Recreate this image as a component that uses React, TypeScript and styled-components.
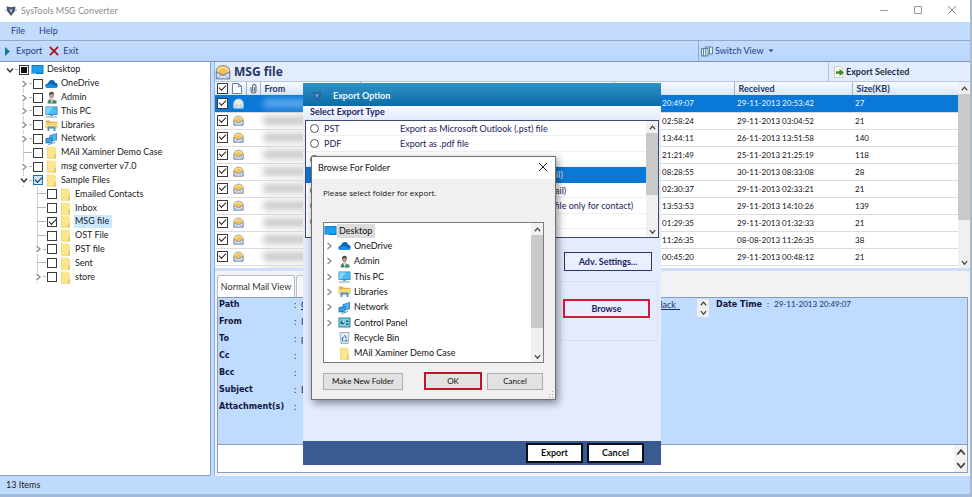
import React from "react";
import styled, { createGlobalStyle, css } from "styled-components";

const ui = `Lato, "Noto Sans", sans-serif`;
const tahoma = `"DejaVu Sans", "Noto Sans", sans-serif`;

const GlobalStyle = createGlobalStyle`
  *, *::before, *::after { box-sizing: border-box; }
  body { margin: 0; font: 9px/12px ${ui}; color: #1a1a1a; background: #fff; }
  button { font: inherit; color: inherit; margin: 0; padding: 0; border: 0; background: none; text-align: left; }
  input { margin: 0; }
  ul { list-style: none; margin: 0; padding: 0; }
  h1, h2, p, dl, dd, dt { margin: 0; font: inherit; }
`;

/* ---------- window ---------- */

const Window = styled.div`
  position: relative;
  display: flex;
  flex-direction: column;
  min-height: 100vh;
  border-right: 2px solid #a9bccb;
  background: #bfdbff;
`;

const TitleBar = styled.header`
  display: flex;
  align-items: center;
  gap: 4px;
  height: 22px;
  padding: 0 13px 0 5px;
  background: #fff;
  color: #8c8c8c;
`;

const AppTitle = styled.h1`
  flex: 1;
`;

const CaptionButtons = styled.div`
  display: flex;
  gap: 24px;
`;

const MenuBar = styled.nav`
  display: flex;
  gap: 14px;
  height: 19px;
  padding: 0 11px;
  align-items: center;
  background: #c3dbfd;
  border-bottom: 1px solid #94a9d2;
  color: #1e3f86;
`;

const ToolBar = styled.div`
  display: flex;
  height: 21px;
  align-items: center;
  background: linear-gradient(#c3dbfd, #bad6fd);
  border-bottom: 1px solid #7f93b5;
  color: #1e3f86;
`;

const ToolGroup = styled.div<{ $end?: boolean }>`
  display: flex;
  align-items: center;
  gap: 7px;
  height: 20px;
  ${(p) => (p.$end ? css`width: 272px; border-left: 1px solid #94a9d2; padding-left: 2px;` : css`flex: 1; padding-left: 4px;`)}
`;

const ToolButton = styled.button<{ $gap: number }>`
  display: flex;
  align-items: center;
  gap: ${(p) => p.$gap}px;
`;

const Main = styled.main`
  flex: 1;
  display: flex;
  gap: 3px;
  min-height: 0;
`;

const StatusBar = styled.footer`
  display: flex;
  align-items: center;
  height: 18px;
  padding: 0 6px;
  background: #c0dafe;
`;

const BottomEdge = styled.div`
  height: 3px;
  background: #a3b9dc;
`;

/* ---------- folder tree ---------- */

const TreePane = styled.aside`
  width: 211px;
  padding: 1px 0 0 4px;
  background: #fff;
  border-right: 1px solid #8fa3c4;
  border-bottom: 1px solid #8fa3c4;
`;

const Tree = styled.ul`
  display: grid;
  grid-auto-rows: 1fr;
  height: 221px;
`;

const TreeItem = styled.li<{ $depth: number }>`
  display: flex;
  align-items: center;
  padding-left: ${(p) => p.$depth * 14}px;
`;

const TreeGuide = styled.span<{ $root?: boolean; $leaf?: boolean }>`
  display: grid;
  align-self: stretch;
  width: 15px;
  align-items: center;
  padding-left: 1px;
  background:
    linear-gradient(#b5b5b5, #b5b5b5) ${(p) => (p.$leaf ? "5px 6px / 9px 1px" : "11px 6px / 3px 1px")} no-repeat,
    linear-gradient(#d0d0d0, #d0d0d0) 5px 0 / ${(p) => (p.$root ? "0 0" : "1px 100%")} no-repeat;
`;

const Twisty = styled.button`
  display: grid;
  place-items: center;
  width: 9px;
  height: 9px;
  background: #fff;
`;

const TreeLabel = styled.label<{ $selected?: boolean }>`
  display: flex;
  align-items: center;
  gap: 2px;

  span {
    padding: 0 3px 1px 1px;
    background: ${(p) => (p.$selected ? "#cce8ff" : "none")};
  }
`;

const Check = styled.input<{ $size?: number; $tint?: boolean }>`
  appearance: none;
  position: relative;
  flex: none;
  width: ${(p) => p.$size ?? 10}px;
  height: ${(p) => p.$size ?? 10}px;
  border: 1px solid ${(p) => (p.$tint ? "#1b6fae" : "#3b3b3b")};
  background: ${(p) => (p.$tint ? "#c5e6fb" : "#fff")};

  &:checked::after {
    content: "";
    position: absolute;
    left: 1px;
    top: 1px;
    width: 7px;
    height: 4px;
    border: solid #222;
    border-width: 0 0 1px 1px;
    transform: rotate(-45deg);
  }

  &:indeterminate::after {
    content: "";
    position: absolute;
    inset: 1px;
    background: #111;
  }
`;

/* ---------- mail list ---------- */

const Workspace = styled.section`
  flex: 1;
  min-width: 0;
  display: flex;
  flex-direction: column;
  background: #f1f2f4;
  border-left: 1px solid #8fb3dd;
`;

const FolderBar = styled.div`
  display: flex;
  height: 20px;
  align-items: stretch;
  background: #e2ecfd;
  border-bottom: 1px solid #b6c7e0;
`;

const FolderTitle = styled.h2`
  flex: 1;
  display: flex;
  align-items: center;
  gap: 3px;
  font: 700 12px/16px "Open Sans", sans-serif;
  color: #26375f;
`;

const ExportSelected = styled.button`
  display: flex;
  align-items: center;
  gap: 2px;
  width: 142px;
  padding-left: 5px;
  border-left: 1px solid #b3c3dd;
  font-weight: 700;
  color: #222b44;
`;

const ListFrame = styled.div`
  display: flex;
  height: 189px;
  background: #fff;
  border-bottom: 3px solid #cfe0f6;
`;

const ListClip = styled.div`
  flex: 1;
  min-width: 0;
  overflow: hidden;
`;

const MailTable = styled.table`
  width: 100%;
  table-layout: fixed;
  border-collapse: collapse;
  font-size: 8px;

  col.tick { width: 15px; }
  col.kind { width: 16px; }
  col.clip { width: 14px; }
  col.from { width: 100px; }
  col.sent { width: 120px; }
  col.received { width: 118px; }
  col.size { width: 106px; }
`;

const HeadCell = styled.th<{ $line?: boolean }>`
  height: 13px;
  padding: 0 0 0 4px;
  text-align: left;
  font: 700 9px/12px ${ui};
  color: #26375f;
  background: linear-gradient(#f9fbff, #d8e5f8);
  ${(p) => p.$line && css`border-left: 1px solid #a5b3c9;`}

  &:first-child, &:nth-child(2), &:nth-child(3) { padding: 0 0 0 2px; }
  svg, input { display: block; }
`;

const MailRow = styled.tr<{ $selected?: boolean }>`
  height: 17px;
  color: ${(p) => (p.$selected ? "#f0f7ff" : "#111")};
  background: ${(p) => (p.$selected ? "#0a78d7" : "#fff")};
  border-bottom: 1px solid #dcdcdc;

  td { padding: 0 0 0 3px; height: 17px; }
  td:first-child { padding-left: 2px; }
  input, svg { display: block; }
`;

const Redacted = styled.div<{ $selected?: boolean }>`
  height: 9px;
  width: 60px;
  border-radius: 4px;
  background: ${(p) => (p.$selected ? "#5ba8ec" : "#c9c9c9")};
  filter: blur(3px);
`;

/* ---------- scroll bars ---------- */

const ScrollTrack = styled.div`
  display: flex;
  flex-direction: column;
  width: 12px;
  flex: none;
  background: #f0f0f0;
`;

const ScrollArrow = styled.button`
  display: grid;
  place-items: center;
  height: 12px;
`;

const ScrollRoom = styled.div`
  flex: 1;
`;

const ScrollThumb = styled.div<{ $height: number }>`
  height: ${(p) => p.$height}px;
  background: #c9c9c9;
`;

const Chevron = ({ dir, color = "#444", size = 7, weight = 1.4 }: { dir: "up" | "down" | "right"; color?: string; size?: number; weight?: number }) => (
  <svg width={size} height={size} viewBox="0 0 8 8" fill="none" stroke={color} strokeWidth={weight}>
    <path d={dir === "up" ? "M1 6 4 2.5 7 6" : dir === "down" ? "M1 2.5 4 6 7 2.5" : "M2.5 1 6 4 2.5 7"} />
  </svg>
);

const ScrollBar = ({ thumb }: { thumb: number }) => (
  <ScrollTrack>
    <ScrollArrow type="button" aria-label="Scroll up"><Chevron dir="up" /></ScrollArrow>
    <ScrollThumb $height={thumb} />
    <ScrollRoom />
    <ScrollArrow type="button" aria-label="Scroll down"><Chevron dir="down" /></ScrollArrow>
  </ScrollTrack>
);

/* ---------- mail details ---------- */

const Tabs = styled.div`
  display: flex;
  gap: 1px;
  height: 26px;
  padding: 4px 0 0 2px;
`;

const Tab = styled.button<{ $active?: boolean }>`
  width: 78px;
  text-align: center;
  color: #333;
  background: ${(p) => (p.$active ? "#fff" : "#f6f6f6")};
  border: 1px solid #b4bccb;
  border-bottom: 0;
  border-radius: 3px 3px 0 0;
`;

const Details = styled.div`
  flex: 1;
  display: flex;
  margin: 0 2px 0 2px;
  background: #bfdbff;
  border: 1px solid #8a9cb9;
  color: #1d2f5e;
`;

const Fields = styled.dl`
  display: grid;
  grid-template-columns: 75px 7px 379px;
  grid-auto-rows: 17px;
  padding-left: 1px;
  align-content: start;
  line-height: 13px;
`;

const FieldName = styled.dt`
  font: 700 8px/13px ${tahoma};
  color: #14143a;
`;

const FieldValue = styled.dd`
  overflow: hidden;
`;

const PathLink = styled.a`
  display: flex;
  justify-content: space-between;
  color: #1d2f5e;
  text-decoration: underline;
`;

const Spinner = styled.div`
  display: flex;
  flex-direction: column;
  width: 12px;
  height: 18px;
  margin: 1px 7px 0 17px;
  background: #f0f0f0;

  button { flex: 1; display: grid; place-items: center; }
`;

const DateLine = styled.p`
  display: flex;
  gap: 5px;
  font: 8px/13px ${ui};

  strong { font: 700 8px/13px ${tahoma}; color: #14143a; }
`;

const Preview = styled.div`
  display: flex;
  height: 28px;
  margin: 0 2px 3px;
  border: 1px solid #8a9cb9;
  border-top: 0;
  background: #fff;
`;

const PreviewText = styled.textarea`
  flex: 1;
  border: 0;
  padding: 2px;
  resize: none;
  outline: 0;
  overflow: hidden;
`;

const PreviewSteps = styled.div`
  display: flex;
  flex-direction: column;
  width: 13px;
  background: #f2f2f2;

  button { flex: 1; display: grid; place-items: center; }
`;

/* ---------- export dialog ---------- */

const ExportDialog = styled.section`
  position: absolute;
  left: 303px;
  top: 83px;
  width: 358px;
  height: 382px;
  display: flex;
  flex-direction: column;
  background: #e4ebfd;
`;

const ExportTitle = styled.h2`
  display: flex;
  align-items: center;
  gap: 10px;
  height: 23px;
  padding: 2px 0 0 8px;
  background: linear-gradient(#2f93c6, #0b6ba6);
  color: #eef6ff;
  font-weight: 700;
`;

const ExportCaption = styled.p`
  height: 14px;
  padding-left: 7px;
  font-weight: 700;
  color: #23235e;
  background: linear-gradient(#f7f9ff, #e2e9fb);
`;

const TypeFrame = styled.div`
  display: flex;
  height: 118px;
  margin: 0 2px;
  border: 1px solid #3d4a6a;
  background: #fff;
`;

const TypeList = styled.ul`
  flex: 1;
  display: grid;
  grid-auto-rows: 1fr;
  height: 108px;
`;

const TypeRow = styled.li<{ $selected?: boolean }>`
  border-bottom: 1px solid ${(p) => (p.$selected ? "#0a78d7" : "#eef0f4")};
  background: ${(p) => (p.$selected ? "#0a78d7" : "#fff")};
  color: ${(p) => (p.$selected ? "#e3f0ff" : "#23235e")};

  label { display: grid; grid-template-columns: 14px 76px 1fr; padding: 2px 0 0 4px; line-height: 12px; white-space: nowrap; }
`;

const Radio = styled.input`
  appearance: none;
  width: 9px;
  height: 9px;
  margin-top: 1px;
  border: 1px solid #555;
  border-radius: 50%;
  background: #fff;
`;

const ExportBody = styled.div`
  flex: 1;
  display: flex;
  flex-direction: column;
  align-items: flex-end;
  padding: 14px 3px 0;
`;

const AdvButton = styled.button`
  width: 88px;
  height: 19px;
  margin-right: 6px;
  border: 1px solid #2b3768;
  text-align: center;
  font-weight: 700;
  color: #23235e;
  background: #eaf0ff;
`;

const BrowseGroup = styled.div`
  display: flex;
  align-items: flex-start;
  justify-content: center;
  width: 98px;
  height: 60px;
  margin-top: 10px;
  padding: 17px 5px 0 0;
  border: 1px solid #d6dff3;
`;

const BrowseButton = styled.button`
  width: 87px;
  height: 19px;
  border: 2px solid #d01c36;
  text-align: center;
  font-weight: 700;
  color: #23235e;
  background: #e8eeff;
`;

const ExportFooter = styled.div`
  display: flex;
  justify-content: flex-end;
  align-items: flex-start;
  gap: 4px;
  height: 24px;
  padding: 2px 17px 0 0;
  background: #395b92;
`;

const FooterButton = styled.button`
  width: 57px;
  height: 20px;
  border: 2px solid #0b0f1c;
  background: #fff;
  text-align: center;
  font-weight: 700;
  color: #111;
`;

/* ---------- folder picker ---------- */

const Picker = styled.section`
  position: absolute;
  left: 311px;
  top: 156px;
  width: 245px;
  height: 244px;
  display: flex;
  flex-direction: column;
  background: #f0f0f0;
  border: 1px solid #6f6f75;
  box-shadow: 2px 3px 8px rgba(0, 0, 0, 0.45);
  color: #111;
`;

const PickerTitle = styled.h2`
  display: flex;
  align-items: center;
  justify-content: space-between;
  height: 22px;
  padding: 0 7px 0 6px;
  background: #fff;
`;

const PickerNote = styled.p`
  padding: 8px 11px 0;
  font: 8px/12px "Open Sans", "Noto Sans", sans-serif;
`;

const PickerFrame = styled.div`
  display: flex;
  height: 141px;
  margin: 23px 11px 0;
  border: 1px solid #7b7b80;
  background: #fff;
`;

const PickerList = styled.ul`
  flex: 1;
  display: grid;
  grid-auto-rows: 1fr;
  height: 138px;
`;

const PickerRow = styled.li<{ $root?: boolean }>`
  display: grid;
  grid-template-columns: ${(p) => (p.$root ? "" : "13px ")}13px max-content;
  column-gap: ${(p) => (p.$root ? 0 : 1)}px;
  align-items: center;

  button:last-child {
    padding: 1px 3px 1px 2px;
    background: ${(p) => (p.$root ? "#dcdcdc" : "none")};
  }
`;

const PickerActions = styled.div`
  display: flex;
  align-items: center;
  padding: 9px 12px 0 11px;
`;

const PickerButton = styled.button<{ $width: number; $marked?: boolean }>`
  width: ${(p) => p.$width}px;
  height: ${(p) => (p.$marked ? 18 : 17)}px;
  margin-left: ${(p) => (p.$marked ? "auto" : "0")};
  margin-right: ${(p) => (p.$marked ? 5 : 0)}px;
  border: ${(p) => (p.$marked ? "2px solid #c8102a" : "1px solid #adadad")};
  background: #e2e2e2;
  text-align: center;
  font-size: 8px;
`;

const GripCorner = styled.div`
  align-self: flex-end;
  margin: auto 1px 1px 0;
  height: 7px;
  svg { display: block; }
`;

/* ---------- icons ---------- */

type IconName = "desktop" | "cloud" | "user" | "pc" | "libraries" | "network" | "folder" | "control" | "recycle";

const Icon = ({ name }: { name: IconName }) => (
  <svg width="13" height="13" viewBox="0 0 13 13">
    {name === "desktop" && (
      <>
        <rect x="0.5" y="2" width="12" height="9" fill="#0a76c4" />
        <rect x="1.3" y="2.8" width="10.4" height="7" fill="#1b9ff0" />
        <path d="M1 10.4h4" stroke="#bfe4ff" strokeWidth=".7" />
      </>
    )}
    {name === "cloud" && (
      <>
        <path d="M3 11C1.2 11 .3 9.8.5 8.5.7 7.2 1.9 6.5 3 6.6 3.4 4.3 5.2 2.8 7.2 3c1.6.2 2.6 1.2 3 2.7 1.5.1 2.5 1.3 2.4 2.7C12.5 10 11.5 11 10 11Z" fill="#0a64b8" />
        <path d="M3 11C1.2 11 .3 9.800.5 8.500L5.500 7 12.500 9.500C12.200 10.500 11.200 11 10 11Z" fill="#1e8fe0" />
      </>
    )}
    {name === "user" && (
      <>
        <path d="M2.500 12.500C2.500 9.800 4 8 6.300 8s4 1.600 4.200 4.500Z" fill="#4f7f6c" />
        <path d="M5.300 8.200 6.700 12.400 8.300 8.200Z" fill="#d5e5dc" />
        <ellipse cx="6.500" cy="4.600" rx="2.300" ry="3" fill="#b99884" />
        <path d="M4 4.500C3.700 2 5 .7 6.700.8S9.200 2.200 8.900 4.500C8.200 3 7 2.600 5.800 3Z" fill="#4b4540" />
        <path d="M8.500 9.500h3v3h-3z" fill="#3f8f56" />
      </>
    )}
    {name === "pc" && (
      <>
        <rect x="0.5" y="1.5" width="12" height="8.500" fill="#3a86b8" />
        <rect x="1.3" y="2.3" width="10.4" height="6.900" fill="#47bdf2" />
        <path d="M1.300 2.300H8L3 9.200H1.300Z" fill="#7fd6fb" />
        <path d="M1 12h11M5 10.500h3" stroke="#6f9fbb" />
      </>
    )}
    {name === "libraries" && (
      <>
        <path d="M.7 1.500h4l1 1.200h6.600V9H.7Z" fill="#e2b340" />
        <path d="M.7 4h11.600v5.500H.7Z" fill="#f6d878" />
        <path d="M2.500 12V7.500h8V12H8.600V9.500H4.400V12Z" fill="#4f95c8" />
      </>
    )}
    {name === "network" && (
      <>
        <path d="M4.500 3.200 12 1v7.200L4.500 9.500Z" fill="#2b83c4" />
        <path d="M5.200 3.900 11.300 2v5.500L5.200 8.500Z" fill="#4fb4ee" />
        <path d="M.6 6.200 7.500 5v5.600L.6 11.400Z" fill="#1d6fae" />
        <path d="M1.300 6.900 6.800 6v4L1.300 10.600Z" fill="#3aa0e2" />
        <path d="M3 12.300 7.500 11.500 10 9.800" stroke="#3b8db9" fill="none" />
      </>
    )}
    {name === "folder" && (
      <>
        <path d="M2 .5h7.500L11 2v10.500H2Z" fill="#fbe58f" />
        <path d="M9.500 8h1.500v4.500H8.500Z" fill="#ecca62" />
        <path d="M2.400.5v11.700H11" fill="none" stroke="#ecd37c" strokeWidth=".8" />
      </>
    )}
    {name === "control" && (
      <>
        <rect x="0.5" y="1.5" width="12" height="10" fill="#2f7fa0" />
        <rect x="1.5" y="2.5" width="10" height="8" fill="#7fd0e0" />
        <circle cx="4.500" cy="6.500" r="2" fill="#1d6288" />
        <path d="M4.500 6.500V4.500a2 2 0 0 1 2 2Z" fill="#e9f6fb" />
        <path d="M8 4.500h2.500V6H8zM8 7.500h2.500V9H8z" fill="#1f5f7a" />
      </>
    )}
    {name === "recycle" && (
      <>
        <path d="M2 1.500h9L10 12.500H3Z" fill="#e6ecf1" stroke="#8c9aa6" strokeWidth=".8" />
        <path d="M6.500 4.200 8.300 7M9 8.500l-1 1.700H6.500M4 9.500 4.500 7.500 5.500 5.800M4 10h1.700" stroke="#2878be" strokeWidth="1.2" fill="none" />
      </>
    )}
  </svg>
);

const Logo = ({ dim }: { dim?: boolean }) => (
  <svg width="12" height="12" viewBox="0 0 12 12" opacity={dim ? 0.7 : 1}>
    <path d="M1.500 1.500 6 2.300 10.500 1.500 9.800 6 6 11 2.200 6Z" fill={dim ? "#2d5d97" : "#46506a"} />
    <path d="M4 3.500 6 8.500 8 3.500 6 4.500Z" fill={dim ? "#8fb8e6" : "#aebcd4"} />
    <path d="M0 5h2M10 5h2" stroke={dim ? "#3d79b4" : "#9aa1b0"} />
  </svg>
);

const Envelope = ({ size = 12, lit }: { size?: number; lit?: boolean }) => (
  <svg width={size} height={size} viewBox="0 0 12 12">
    <path d="M1 5C1 3 3.500 1.200 6 1.200S11 3 11 5v6H1Z" fill={lit ? "#d9ebfb" : "#f3e3a2"} stroke={lit ? "#b5d4f0" : "#8f8a70"} strokeWidth=".8" />
    <path d="M2.300 5.500C3 4 4.500 3 6 3s3 1 3.700 2.500v3H2.300Z" fill={lit ? "#f6edc6" : "#f9c24e"} />
    <path d="M1 6 6 8.500 11 6v5H1Z" fill="#d9e6f6" stroke={lit ? "#b5d4f0" : "#7085a5"} strokeWidth=".8" />
    <path d="M1 11 5 8M11 11 7 8" stroke="#7f93b3" strokeWidth=".6" />
  </svg>
);

/* ---------- data ---------- */

type Node = { label: string; icon: IconName; depth: number; open?: boolean; state?: "on" | "mixed" | "partial"; selected?: boolean };

const nodes: Node[] = [
  { label: "Desktop", icon: "desktop", depth: 0, open: true, state: "mixed" },
  { label: "OneDrive", icon: "cloud", depth: 1, open: false },
  { label: "Admin", icon: "user", depth: 1, open: false },
  { label: "This PC", icon: "pc", depth: 1, open: false },
  { label: "Libraries", icon: "libraries", depth: 1, open: false },
  { label: "Network", icon: "network", depth: 1, open: false },
  { label: "MAil Xaminer Demo Case", icon: "folder", depth: 1 },
  { label: "msg converter v7.0", icon: "folder", depth: 1, open: false },
  { label: "Sample Files", icon: "folder", depth: 1, open: true, state: "partial" },
  { label: "Emailed Contacts", icon: "folder", depth: 2 },
  { label: "Inbox", icon: "folder", depth: 2 },
  { label: "MSG file", icon: "folder", depth: 2, state: "on", selected: true },
  { label: "OST File", icon: "folder", depth: 2 },
  { label: "PST file", icon: "folder", depth: 2, open: false },
  { label: "Sent", icon: "folder", depth: 2 },
  { label: "store", icon: "folder", depth: 2, open: false },
];

const mails: [string, string, string][] = [
  ["29-11-2013 20:49:07", "29-11-2013 20:53:42", "27"],
  ["29-11-2013 02:58:24", "29-11-2013 03:04:52", "21"],
  ["26-11-2013 13:44:11", "26-11-2013 13:51:58", "140"],
  ["25-11-2013 21:21:49", "25-11-2013 21:25:19", "118"],
  ["30-11-2013 08:28:55", "30-11-2013 08:33:08", "28"],
  ["29-11-2013 02:30:37", "29-11-2013 02:33:21", "21"],
  ["29-11-2013 13:53:53", "29-11-2013 14:10:26", "139"],
  ["29-11-2013 01:29:35", "29-11-2013 01:32:33", "21"],
  ["08-08-2013 11:26:35", "08-08-2013 11:26:35", "38"],
  ["29-11-2013 00:45:20", "29-11-2013 00:48:12", "21"],
  ["", "", ""],
];

const types: [string, string][] = [
  ["PST", "Export as Microsoft Outlook (.pst) file"],
  ["PDF", "Export as .pdf file"],
  ["MSG", "Export as .msg file"],
  ["EML", "Export as .eml files (one file for each mail)"],
  ["HTML", "Export as .html files (one file for each mail)"],
  ["VCF", "Export as .vcf file format (Create vCard file only for contact)"],
  ["RTF", "Export as .rtf file"],
];

const fields: [string, string][] = [
  ["From", "H"],
  ["To", "p"],
  ["Cc", ""],
  ["Bcc", ""],
  ["Subject", "E"],
  ["Attachment(s)", ""],
];

const places: [string, IconName, boolean][] = [
  ["OneDrive", "cloud", true],
  ["Admin", "user", true],
  ["This PC", "pc", true],
  ["Libraries", "libraries", true],
  ["Network", "network", true],
  ["Control Panel", "control", true],
  ["Recycle Bin", "recycle", false],
  ["MAil Xaminer Demo Case", "folder", false],
];

/* ---------- page ---------- */

const markMixed = (el: HTMLInputElement | null) => {
  if (el) el.indeterminate = true;
};

const FolderTree = () => (
  <TreePane>
    <Tree>
      {nodes.map((n) => (
        <TreeItem key={n.label} $depth={n.depth}>
          <TreeGuide $root={n.depth === 0} $leaf={n.open === undefined}>
            {n.open !== undefined && (
              <Twisty type="button" aria-label={`Toggle ${n.label}`}>
                <Chevron dir={n.open ? "down" : "right"} color={n.open ? "#333" : "#8d8d8d"} size={8} />
              </Twisty>
            )}
          </TreeGuide>
          <TreeLabel $selected={n.selected}>
            <Check
              type="checkbox"
              $tint={n.state === "partial"}
              defaultChecked={n.state === "on" || n.state === "partial"}
              ref={n.state === "mixed" ? markMixed : undefined}
            />
            <Icon name={n.icon} />
            <span>{n.label}</span>
          </TreeLabel>
        </TreeItem>
      ))}
    </Tree>
  </TreePane>
);

const MailList = () => (
  <ListFrame>
    <ListClip>
      <MailTable>
        <colgroup>
          <col className="tick" />
          <col className="kind" />
          <col className="clip" />
          <col className="from" />
          <col />
          <col className="sent" />
          <col className="received" />
          <col className="size" />
        </colgroup>
        <thead>
          <tr>
            <HeadCell><Check type="checkbox" $size={11} defaultChecked aria-label="Select all" /></HeadCell>
            <HeadCell>
              <svg width="10" height="11" viewBox="0 0 10 11"><path d="M.5.500h6l3 3v7h-9Z M6.500.500v3h3" fill="#f7fbff" stroke="#6f8299" /></svg>
            </HeadCell>
            <HeadCell $line>
              <svg width="9" height="11" viewBox="0 0 9 11" fill="none" stroke="#6c7078" strokeWidth="1.1"><path d="M2 4v3.500a2.500 2.500 0 0 0 5 0V3a1.800 1.800 0 0 0-3.500 0v4a1 1 0 0 0 2 0V4" /></svg>
            </HeadCell>
            <HeadCell $line>From</HeadCell>
            <HeadCell $line>Subject</HeadCell>
            <HeadCell $line>Sent</HeadCell>
            <HeadCell $line>Received</HeadCell>
            <HeadCell $line>Size(KB)</HeadCell>
          </tr>
        </thead>
        <tbody>
          {mails.map(([sent, received, size], i) => (
            <MailRow key={i} $selected={i === 0}>
              <td><Check type="checkbox" $size={11} defaultChecked aria-label={`Select mail ${i + 1}`} /></td>
              <td><Envelope size={11} lit={i === 0} /></td>
              <td />
              <td><Redacted $selected={i === 0} /></td>
              <td />
              <td>{sent}</td>
              <td>{received}</td>
              <td>{size}</td>
            </MailRow>
          ))}
        </tbody>
      </MailTable>
    </ListClip>
    <ScrollBar thumb={126} />
  </ListFrame>
);

const MailDetails = () => (
  <>
    <Tabs role="tablist">
      <Tab type="button" role="tab" aria-selected $active>Normal Mail View</Tab>
      <Tab type="button" role="tab" aria-selected={false}>Hex</Tab>
    </Tabs>
    <Details>
      <Fields>
        <FieldName>Path</FieldName>
        <dd>:</dd>
        <FieldValue><PathLink href="#path"><span>C</span><span>Black_</span></PathLink></FieldValue>
        {fields.map(([name, value]) => (
          <React.Fragment key={name}>
            <FieldName>{name}</FieldName>
            <dd>:</dd>
            <FieldValue>{value}</FieldValue>
          </React.Fragment>
        ))}
      </Fields>
      <Spinner>
        <button type="button" aria-label="Previous path line"><Chevron dir="up" /></button>
        <button type="button" aria-label="Next path line"><Chevron dir="down" /></button>
      </Spinner>
      <DateLine><strong>Date Time</strong><span>:</span><span>29-11-2013 20:49:07</span></DateLine>
    </Details>
    <Preview>
      <PreviewText aria-label="Message preview" />
      <PreviewSteps>
        <button type="button" aria-label="Scroll preview up"><Chevron dir="up" size={10} /></button>
        <button type="button" aria-label="Scroll preview down"><Chevron dir="down" size={10} /></button>
      </PreviewSteps>
    </Preview>
  </>
);

const ExportOptions = () => (
  <ExportDialog role="dialog" aria-label="Export Option">
    <ExportTitle><Logo dim />Export Option</ExportTitle>
    <ExportCaption>Select Export Type</ExportCaption>
    <TypeFrame>
      <TypeList>
        {types.map(([name, text], i) => (
          <TypeRow key={name} $selected={i === 3}>
            <label><Radio type="radio" name="export-type" />{name}<span>{text}</span></label>
          </TypeRow>
        ))}
      </TypeList>
      <ScrollBar thumb={62} />
    </TypeFrame>
    <ExportBody>
      <AdvButton type="button">Adv. Settings...</AdvButton>
      <BrowseGroup><BrowseButton type="button">Browse</BrowseButton></BrowseGroup>
    </ExportBody>
    <ExportFooter>
      <FooterButton type="button">Export</FooterButton>
      <FooterButton type="button">Cancel</FooterButton>
    </ExportFooter>
  </ExportDialog>
);

const FolderPicker = () => (
  <Picker role="dialog" aria-label="Browse For Folder">
    <PickerTitle>
      Browse For Folder
      <button type="button" aria-label="Close">
        <svg width="10" height="10" viewBox="0 0 10 10" stroke="#222" strokeWidth="1"><path d="M1 1 9 9M9 1 1 9" /></svg>
      </button>
    </PickerTitle>
    <PickerNote>Please select folder for export.</PickerNote>
    <PickerFrame>
      <PickerList>
        <PickerRow $root><Icon name="desktop" /><button type="button">Desktop</button></PickerRow>
        {places.map(([label, icon, closed]) => (
          <PickerRow key={label}>
            {closed ? (
              <Twisty type="button" aria-label={`Expand ${label}`}><Chevron dir="right" color="#8d8d8d" size={8} /></Twisty>
            ) : (
              <span />
            )}
            <Icon name={icon} />
            <button type="button">{label}</button>
          </PickerRow>
        ))}
      </PickerList>
      <ScrollBar thumb={93} />
    </PickerFrame>
    <PickerActions>
      <PickerButton type="button" $width={80}>Make New Folder</PickerButton>
      <PickerButton type="button" $width={58} $marked>OK</PickerButton>
      <PickerButton type="button" $width={56}>Cancel</PickerButton>
    </PickerActions>
    <GripCorner>
      <svg width="7" height="7" viewBox="0 0 7 7" fill="#a5a5a5"><path d="M5 0h1v1H5zM5 3h1v1H5zM2 3h1v1H2zM5 6h1v1H5zM2 6h1v1H2z" /></svg>
    </GripCorner>
  </Picker>
);

export default function App() {
  return (
    <Window>
      <GlobalStyle />
      <TitleBar>
        <Logo />
        <AppTitle>SysTools MSG Converter</AppTitle>
        <CaptionButtons>
          <button type="button" aria-label="Minimize">
            <svg width="10" height="10" viewBox="0 0 10 10" stroke="#999"><path d="M1 5.500h8" /></svg>
          </button>
          <button type="button" aria-label="Maximize">
            <svg width="10" height="10" viewBox="0 0 10 10" stroke="#999" fill="none"><path d="M1.500 1.500h7v7h-7z" /></svg>
          </button>
          <button type="button" aria-label="Close window">
            <svg width="10" height="10" viewBox="0 0 10 10" stroke="#888"><path d="M1 1 9 9M9 1 1 9" /></svg>
          </button>
        </CaptionButtons>
      </TitleBar>
      <MenuBar>
        <button type="button">File</button>
        <button type="button">Help</button>
      </MenuBar>
      <ToolBar>
        <ToolGroup>
          <ToolButton type="button" $gap={5}>
            <svg width="7" height="9" viewBox="0 0 7 9"><path d="M1 0 6 4.500 1 9Z" fill="#0f7f86" /></svg>
            Export
          </ToolButton>
          <ToolButton type="button" $gap={4}>
            <svg width="10" height="10" viewBox="0 0 10 10" stroke="#a3151c" strokeWidth="1.7"><path d="M.8.8 9.200 9.200M9 .8 1 9.200" /></svg>
            Exit
          </ToolButton>
        </ToolGroup>
        <ToolGroup $end>
          <ToolButton type="button" $gap={2}>
            <svg width="12" height="11" viewBox="0 0 12 11" fill="#dff0f3" stroke="#4d7690" strokeWidth=".9">
              <path d="M4.500 1h7v7h-7z" /><path d="M.5 2.500h6.500v7.500H.5z" /><path d="M2.500 3v7M4.700 3v7M8.500 1v7" />
            </svg>
            Switch View
            <svg width="9" height="4" viewBox="0 0 9 4"><path d="M2.500.5h5L5 3Z" fill="#1e3f86" /></svg>
          </ToolButton>
        </ToolGroup>
      </ToolBar>
      <Main>
        <FolderTree />
        <Workspace>
          <FolderBar>
            <FolderTitle><Envelope size={16} />MSG file</FolderTitle>
            <ExportSelected type="button">
              <svg width="10" height="12" viewBox="0 0 10 12">
                <path d="M.5.5h6l2 2v9h-8Z" fill="#fbfdf4" stroke="#b3bfa6" strokeWidth=".7" />
                <path d="M2 5.300h3.500V3L10 6.500 5.500 10V7.700H2Z" fill="#3b8a22" />
              </svg>
              Export Selected
            </ExportSelected>
          </FolderBar>
          <MailList />
          <MailDetails />
        </Workspace>
      </Main>
      <StatusBar>13 Items</StatusBar>
      <BottomEdge />
      <ExportOptions />
      <FolderPicker />
    </Window>
  );
}
